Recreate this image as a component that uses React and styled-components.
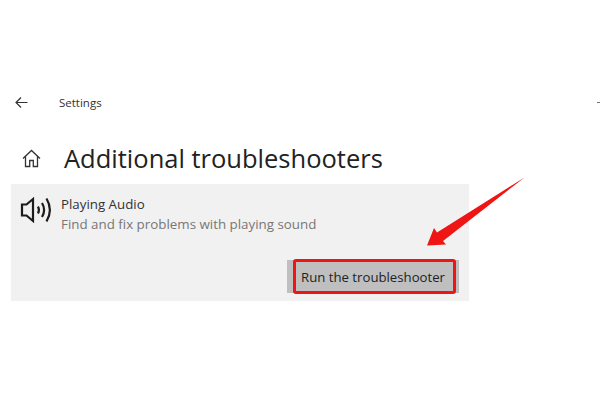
import styled, { createGlobalStyle } from "styled-components";

const GlobalStyle = createGlobalStyle`
  html, body {
    margin: 0;
    padding: 0;
    background: #fff;
  }
`;

const Page = styled.div`
  position: relative;
  width: 600px;
  height: 400px;
  overflow: hidden;
  padding-top: 93px;
  box-sizing: border-box;
  font-family: "Open Sans", "Noto Sans", sans-serif;
  color: #1a1a1a;
`;

const TopBar = styled.div`
  display: flex;
  align-items: center;
  height: 18px;
  padding-left: 15px;
`;

const BackIcon = styled.svg`
  width: 13px;
  height: 13px;
  margin-right: 31px;
  fill: none;
  stroke: #333;
  stroke-width: 1.2;
`;

const AppName = styled.span`
  font-size: 11.5px;
  color: #333;
`;

const EdgeMark = styled.span`
  width: 3px;
  height: 1px;
  margin-left: auto;
  background: #777;
`;

const Heading = styled.div`
  display: flex;
  align-items: center;
  height: 40px;
  margin-top: 27px;
  padding-left: 22px;
`;

const HomeIcon = styled.svg`
  width: 19px;
  height: 19px;
  margin-right: 23px;
  fill: none;
  stroke: #333;
  stroke-width: 1.3;
`;

const Title = styled.h1`
  margin: 0;
  font-size: 25.5px;
  font-weight: 400;
  color: #222;
  white-space: nowrap;
`;

const Panel = styled.section`
  width: 458px;
  height: 117px;
  margin: 6px 0 0 11px;
  padding: 11px 10px 8px 9px;
  box-sizing: border-box;
  background: #f1f1f1;
  display: flex;
  flex-direction: column;
`;

const Info = styled.div`
  display: flex;
  align-items: flex-start;
`;

const SpeakerIcon = styled.svg`
  width: 32px;
  height: 30px;
  flex: none;
  margin-right: 9px;
  fill: none;
  stroke: #1c1c1c;
  stroke-width: 2.2;
`;

const Name = styled.div`
  font-size: 13.3px;
  line-height: 18px;
  color: #333;
`;

const Description = styled.div`
  font-size: 13.35px;
  line-height: 18px;
  margin-top: 2px;
  color: #777;
`;

const Actions = styled.div`
  margin-top: auto;
  display: flex;
  justify-content: flex-end;
`;

const RunButton = styled.button`
  position: relative;
  width: 172px;
  height: 33px;
  padding: 0 0 0 14px;
  border: 0;
  background: #bfbfbf;
  font-family: inherit;
  font-size: 13.2px;
  text-align: left;
  color: #222;
  cursor: pointer;

  &::after {
    content: "";
    position: absolute;
    top: -1px;
    left: 6px;
    right: 3px;
    bottom: -1px;
    border: 3px solid #f01515;
    border-radius: 3px;
  }
`;

const Arrow = styled.svg`
  position: absolute;
  top: 176px;
  left: 426px;
  width: 100px;
  height: 72px;
`;

export default function App() {
  return (
    <Page>
      <GlobalStyle />
      <TopBar>
        <BackIcon viewBox="0 0 13 13">
          <path d="M12.5 6.5H1M6 1.5L1 6.5l5 5" />
        </BackIcon>
        <AppName>Settings</AppName>
        <EdgeMark />
      </TopBar>
      <Heading>
        <HomeIcon viewBox="0 0 19 19">
          <path d="M1 9.5L9.5 1.5 18 9.5M3.5 7.5V17.5h4.2v-6h3.6v6h4.2V7.5" />
        </HomeIcon>
        <Title>Additional troubleshooters</Title>
      </Heading>
      <Panel>
        <Info>
          <SpeakerIcon viewBox="0 0 32 30">
            <path d="M2 9.5h4.5L13 4v22l-6.5-5.500H2z" />
            <path d="M18 11.500c1.200 2.300 1.200 4.700 0 7" />
            <path d="M22 8c2.600 4.300 2.600 9.700 0 14" />
            <path d="M26.500 3.500c4.300 7.300 4.300 15.700 0 23" />
          </SpeakerIcon>
          <div>
            <Name>Playing Audio</Name>
            <Description>Find and fix problems with playing sound</Description>
          </div>
        </Info>
        <Actions>
          <RunButton>Run the troubleshooter</RunButton>
        </Actions>
      </Panel>
      <Arrow viewBox="0 0 100 72">
        <path d="M98.500 1.500L17 65l3 3.500L1 69.500 8 52l3 4.500z" fill="#f01515" />
      </Arrow>
    </Page>
  );
}
